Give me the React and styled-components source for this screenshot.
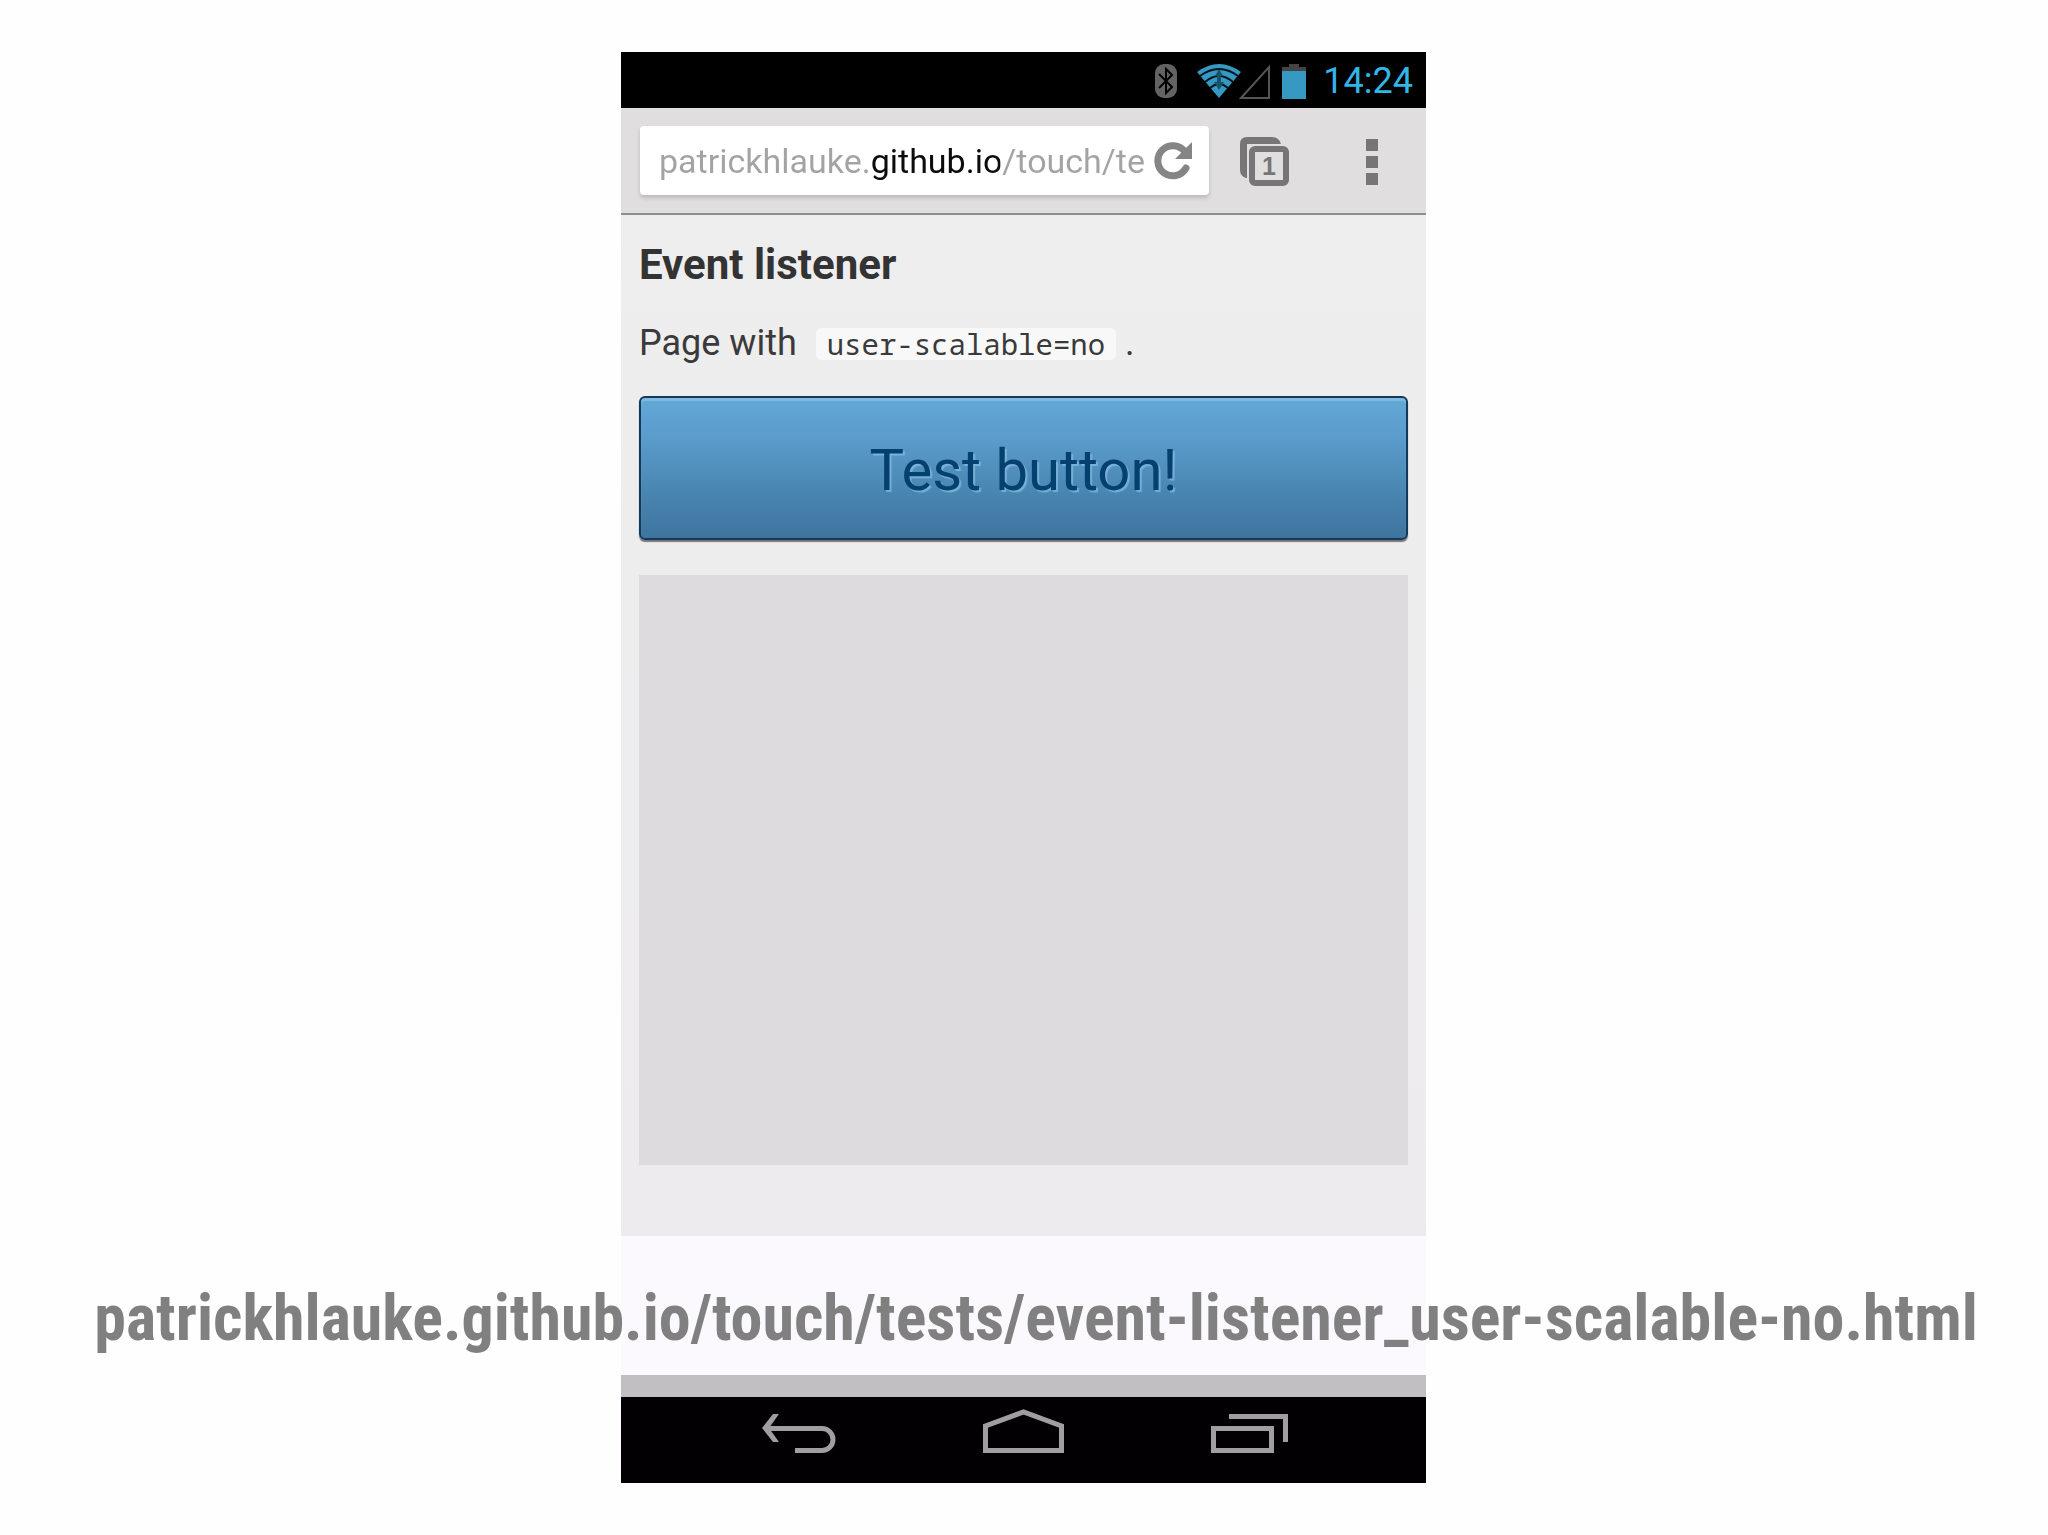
import React, { useState } from 'react';
import styled, { createGlobalStyle } from 'styled-components';

const GlobalStyle = createGlobalStyle`
  * {
    box-sizing: border-box;
  }

  body {
    margin: 0;
    background: #fefefe;
    font-family: Roboto, 'Noto Sans', sans-serif;
  }

  h1,
  p,
  figure {
    margin: 0;
  }

  svg {
    display: block;
  }
`;

/* phone sits in the middle column, the caption runs across all three */
const Slide = styled.figure`
  position: relative;
  display: grid;
  grid-template-columns: 621fr 805fr 622fr;
  padding: 52px 0;
`;

const Phone = styled.div`
  grid-column: 2;
  display: flex;
  flex-direction: column;
  min-width: 0;
`;

const StatusBar = styled.div`
  display: flex;
  align-items: center;
  justify-content: flex-end;
  height: 56px;
  padding: 2px 13px 0 0;
  background: #000;
`;

const StatusIcon = styled.svg`
  margin-right: ${(p) => p.$gap}px;
`;

const Clock = styled.time`
  font-size: 36px;
  line-height: 54px;
  color: #33b5e5;
`;

const Toolbar = styled.div`
  display: flex;
  align-items: center;
  height: 107px;
  padding: 0 48px 0 19px;
  border-bottom: 2px solid #8f8e8f;
  background: #e0dedf;
`;

const AddressBar = styled.form`
  flex: 1;
  display: flex;
  align-items: center;
  min-width: 0;
  height: 69px;
  padding: 0 16px 0 19px;
  border-radius: 4px;
  background: #fff;
  box-shadow: 0 3px 4px rgba(0, 0, 0, 0.16);
`;

/* the host is darker than the rest of the address */
const AddressInput = styled.input`
  flex: 1;
  min-width: 0;
  height: 48px;
  padding: 0;
  border: none;
  font-family: inherit;
  font-size: 34px;
  color: transparent;
  background: linear-gradient(to right, #a3a3a3 210px, #0c0c0c 210px 341px, #a3a3a3 341px);
  background-clip: text;
  &:focus {
    outline: none;
  }
`;

const IconButton = styled.button`
  display: flex;
  padding: 0;
  border: none;
  background: none;
  margin-left: ${(p) => p.$gap}px;
`;

const Page = styled.main`
  padding: 26px 18px 71px;
  background: linear-gradient(#eeeeee, #edebee);
`;

const Title = styled.h1`
  font-size: 42px;
  line-height: 48px;
  font-weight: bold;
  color: #333;
`;

const Intro = styled.p`
  margin-top: 32px;
  font-size: 36px;
  line-height: 44px;
  color: #3a3a3a;

  code {
    display: inline-block;
    margin-left: 10px;
    padding: 0 11px;
    border-radius: 6px;
    background: #f8f8f8;
    font-family: 'Noto Sans Mono', 'DejaVu Sans Mono', monospace;
    font-size: 29px;
    line-height: 32px;
  }
`;

const TestButton = styled.button`
  display: block;
  width: 100%;
  height: 144px;
  margin-top: 31px;
  padding: 4px 0 0;
  border: 2px solid #12395a;
  border-radius: 6px;
  background: linear-gradient(#62a8d6, #5a9bcb 30%, #4783ae 72%, #3f759f);
  box-shadow: inset 0 3px 1px #84b8e0, 0 2px 1px rgba(0, 0, 0, 0.5);
  font-family: inherit;
  font-size: 58px;
  color: #05416f;
  text-shadow: 2px 2px 1px rgba(150, 200, 235, 0.6);
`;

const Output = styled.div`
  height: 590px;
  margin-top: 35px;
  background: #dddbde;
`;

const Band = styled.div`
  height: 139px;
  background: #fbf9fd;
`;

const Edge = styled.div`
  height: 22px;
  background: #c1bfc2;
`;

const NavBar = styled.nav`
  display: flex;
  justify-content: center;
  gap: 147px;
  height: 86px;
  padding: 12px 0 0 2px;
  background: #020003;
`;

const NavButton = styled.button`
  display: flex;
  align-items: flex-start;
  padding: 0;
  border: none;
  background: none;
`;

const Caption = styled.figcaption`
  position: absolute;
  left: 0;
  right: 0;
  bottom: 180px;
  padding-left: 24px;
  text-align: center;
  white-space: nowrap;
  font-family: 'Roboto Condensed', 'Liberation Sans Narrow', sans-serif;
  font-size: 64px;
  line-height: 72px;
  font-weight: bold;
  color: #808080;
`;

const StatusIcons = () => (
  <>
    <StatusIcon $gap={20} width="22" height="34" viewBox="0 0 22 34" aria-hidden="true">
      <rect width="22" height="34" rx="9" fill="#636363" />
      <path d="M4 10L17 23L11 29V5L17 11L4 24" fill="none" stroke="#000" strokeWidth="2" />
    </StatusIcon>
    <StatusIcon $gap={-2} width="44" height="34" viewBox="0 0 44 34" aria-hidden="true">
      <path d="M0 8Q22 -8 44 8L22 34Z" fill="#3599c2" />
      <path
        d="M3 12Q22 -2 41 12M8 18Q22 6 36 18M13 24Q22 16 31 24"
        fill="none"
        stroke="#00131c"
        strokeWidth="2"
      />
      <path d="M22 5L26 12H24V18H27L22 26L17 18H20V12H18Z" fill="#17526b" />
    </StatusIcon>
    <StatusIcon $gap={12} width="31" height="35" viewBox="0 0 31 35" aria-hidden="true">
      <path d="M2 34L30 3V34Z" fill="none" stroke="#555" strokeWidth="2" />
    </StatusIcon>
    <StatusIcon $gap={17} width="24" height="35" viewBox="0 0 24 35" aria-hidden="true">
      <path d="M7 0H17V3H24V8H0V3H7Z" fill="#444" />
      <rect y="7" width="24" height="28" fill="#3599c2" />
    </StatusIcon>
  </>
);

const App = () => {
  const [address, setAddress] = useState(
    'patrickhlauke.github.io/touch/tests/event-listener_user-scalable-no.html'
  );

  return (
    <>
      <GlobalStyle />
      <Slide>
        <Phone>
          <StatusBar>
            <StatusIcons />
            <Clock>14:24</Clock>
          </StatusBar>

          <Toolbar>
            <AddressBar onSubmit={(e) => e.preventDefault()}>
              <AddressInput
                type="text"
                aria-label="Address"
                value={address}
                onChange={(e) => setAddress(e.target.value)}
              />
              <IconButton type="button" aria-label="Reload" $gap={10}>
                <svg width="39" height="38" viewBox="0 0 39 38">
                  <path
                    d="M31 10A15 15 0 1 0 32 26"
                    fill="none"
                    stroke="#858585"
                    strokeWidth="7"
                    strokeLinecap="round"
                  />
                  <path d="M38 0V17H21Z" fill="#858585" />
                </svg>
              </IconButton>
            </AddressBar>
            <IconButton type="button" aria-label="Tabs, 1 open" $gap={31}>
              <svg width="50" height="52" viewBox="0 -2 50 52">
                <path d="M6 41Q0 39 0 33V7Q0 0 7 0H32Q39 0 41 7H7V41Z" fill="#777576" />
                <rect x="12" y="12" width="34" height="34" rx="3" fill="none" stroke="#777576" strokeWidth="6" />
                <text x="29" y="38" textAnchor="middle" fontSize="25" fontWeight="bold" fill="#777576">
                  1
                </text>
              </svg>
            </IconButton>
            <IconButton type="button" aria-label="Menu" $gap={76}>
              <svg width="12" height="48" viewBox="0 -2 12 48">
                <path d="M0 0H12V12H0ZM0 17H12V29H0ZM0 34H12V46H0Z" fill="#777576" />
              </svg>
            </IconButton>
          </Toolbar>

          <Page>
            <Title>Event listener</Title>
            <Intro>
              Page with <code>user-scalable=no</code> .
            </Intro>
            <TestButton type="button">Test button!</TestButton>
            <Output />
          </Page>
          <Band />
          <Edge />

          <NavBar>
            <NavButton type="button" aria-label="Back">
              <svg width="74" height="44" viewBox="0 0 74 44" fill="none" stroke="#a09ea1" strokeWidth="5">
                <path d="M5 19.500H60A11 11 0 0 1 60 41.500H33" />
                <path d="M0 19L11 5H17L7 19L17 33H11Z" fill="#a09ea1" stroke="none" />
              </svg>
            </NavButton>
            <NavButton type="button" aria-label="Home">
              <svg width="81" height="44" viewBox="0 0 81 44" fill="none" stroke="#a09ea1" strokeWidth="5">
                <path d="M2.500 41.500V17L40.500 3L78.500 17V41.500Z" />
              </svg>
            </NavButton>
            <NavButton type="button" aria-label="Recent apps">
              <svg width="77" height="44" viewBox="0 0 77 44" fill="none" stroke="#a09ea1" strokeWidth="5">
                <path d="M2.500 19.500H60.500V41.500H2.500Z" />
                <path d="M18 7.500H74.500V33" />
              </svg>
            </NavButton>
          </NavBar>
        </Phone>
        <Caption>patrickhlauke.github.io/touch/tests/event-listener_user-scalable-no.html</Caption>
      </Slide>
    </>
  );
};

export default App;
